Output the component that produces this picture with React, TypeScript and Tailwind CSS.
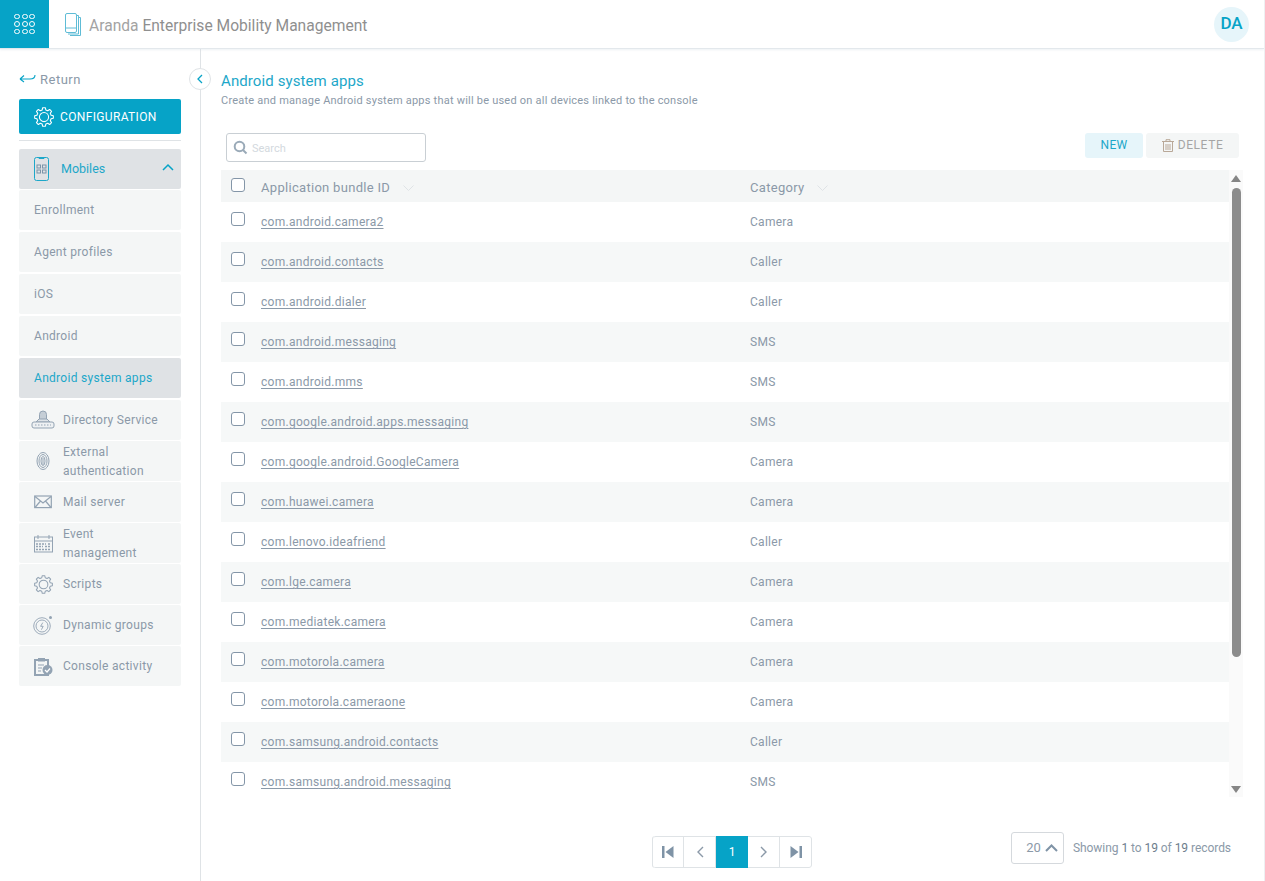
import React from "react";

const rows: [string, string][] = [
  ["com.android.camera2", "Camera"],
  ["com.android.contacts", "Caller"],
  ["com.android.dialer", "Caller"],
  ["com.android.messaging", "SMS"],
  ["com.android.mms", "SMS"],
  ["com.google.android.apps.messaging", "SMS"],
  ["com.google.android.GoogleCamera", "Camera"],
  ["com.huawei.camera", "Camera"],
  ["com.lenovo.ideafriend", "Caller"],
  ["com.lge.camera", "Camera"],
  ["com.mediatek.camera", "Camera"],
  ["com.motorola.camera", "Camera"],
  ["com.motorola.cameraone", "Camera"],
  ["com.samsung.android.contacts", "Caller"],
  ["com.samsung.android.messaging", "SMS"],
];

function gearPath() {
  const pts: string[] = [];
  const teeth = 8;
  for (let i = 0; i < teeth; i++) {
    const a = (i / teeth) * Math.PI * 2;
    const step = (Math.PI * 2) / teeth;
    const p = (r: number, t: number) => `${(12 + r * Math.cos(t)).toFixed(2)} ${(12 + r * Math.sin(t)).toFixed(2)}`;
    pts.push(`${i === 0 ? "M" : "L"}${p(8.8, a - step * 0.32)}`);
    pts.push(`L${p(11.3, a - step * 0.18)}`);
    pts.push(`L${p(11.3, a + step * 0.18)}`);
    pts.push(`L${p(8.8, a + step * 0.32)}`);
  }
  return pts.join(" ") + "Z";
}

const Gear = ({ size, color, sw = 1.2 }: { size: number; color: string; sw?: number }) => (
  <svg width={size} height={size} viewBox="0 0 24 24" fill="none" stroke={color} strokeWidth={sw} strokeLinejoin="round">
    <path d={gearPath()} />
    <circle cx="12" cy="12" r="5.5" />
  </svg>
);

const subItems = ["Enrollment", "Agent profiles", "iOS", "Android", "Android system apps"];

const ic = "#93a3b3";
const icons: Record<string, React.ReactNode> = {
  dir: (
    <svg width="24" height="20" viewBox="0 0 24 20" fill="none" stroke={ic} strokeWidth="1">
      <path d="M8.5 9V4.5a3.5 3.5 0 0 1 7 0V9" fill="#c5ced6" />
      <path d="M5 12l3-3h8l3 3z" fill="#dfe4e8" />
      <rect x="1" y="12" width="22" height="6" rx="2" fill="#eef1f3" />
      <path d="M4 15h16" strokeDasharray="1.5 1.5" />
    </svg>
  ),
  ext: (
    <svg width="14" height="20" viewBox="0 0 14 20" fill="none" stroke={ic} strokeWidth="1">
      <ellipse cx="7" cy="10" rx="6" ry="8.5" />
      <ellipse cx="7" cy="10" rx="4" ry="6.5" />
      <ellipse cx="7" cy="10" rx="2" ry="4.5" />
      <path d="M7 7v7" />
    </svg>
  ),
  mail: (
    <svg width="18" height="14" viewBox="0 0 18 14" fill="none" stroke={ic} strokeWidth="1.2">
      <rect x=".7" y="1" width="16.6" height="11.6" />
      <path d="M1 1.5l8 6.5 8-6.5M1 12.5l5.5-6.5M17 12.5L11.5 6" />
    </svg>
  ),
  event: (
    <svg width="19" height="19" viewBox="0 0 19 19" fill="none" stroke={ic} strokeWidth="1">
      <rect x=".5" y="3" width="18" height="15" />
      <path d="M4 1v4M15 1v4M.5 7h18" />
      <path d="M2 10h10M14 10h3M2 12.5h7M11 12.5h6M2 15.5h15" strokeWidth="1.4" strokeDasharray="2 1" />
    </svg>
  ),
  scripts: <Gear size={19} color={ic} sw={1.3} />,
  dyn: (
    <svg width="20" height="20" viewBox="0 0 20 20" fill="none" stroke={ic} strokeWidth=".9">
      <circle cx="9" cy="11" r="8.3" />
      <circle cx="9" cy="11" r="6" />
      <path d="M9.8 7.6L7.6 11.3h2.6l-1.8 3.4" />
      <circle cx="17.5" cy="2.5" r="1.5" fill={ic} stroke="none" />
    </svg>
  ),
  con: (
    <svg width="19" height="19" viewBox="0 0 19 19" fill="none">
      <path d="M1 3h13v15H1z" fill="none" stroke={ic} strokeWidth="2" />
      <rect x="4" y="1" width="7" height="3.5" fill={ic} />
      <path d="M4 8h6M4 11h4M4 14h3" stroke={ic} />
      <circle cx="13.5" cy="13" r="5" fill={ic} />
      <path d="M11 13l2 2 3-3.5" stroke="#fff" strokeWidth="1.2" />
    </svg>
  ),
};

const mainItems: { k: string; label: React.ReactNode; h?: boolean }[] = [
  { k: "dir", label: "Directory Service" },
  { k: "ext", label: <>External<br />authentication</>, h: true },
  { k: "mail", label: "Mail server" },
  { k: "event", label: <>Event<br />management</>, h: true },
  { k: "scripts", label: "Scripts" },
  { k: "dyn", label: "Dynamic groups" },
  { k: "con", label: "Console activity" },
];

const Check = () => <span className="block w-[14px] h-[14px] rounded-[3px] border border-[#8496a8] bg-white shrink-0" />;

const PageBtn = ({ children, cls = "w-[32px]" }: { children: React.ReactNode; cls?: string }) => (
  <div className={`h-[32px] flex items-center justify-center border-y border-r border-[#dfe3e6] ${cls}`}>{children}</div>
);

export default function App() {
  return (
    <div className="w-[1265px] h-[881px] overflow-hidden bg-white flex flex-col text-[#8b99a8] border-r border-[#eef0f2]" style={{ fontFamily: '"Roboto","Liberation Sans",sans-serif' }}>
      <header className="h-[49px] shrink-0 flex items-center border-b border-[#e3e8ec] shadow-[0_1px_2px_rgba(210,220,230,0.4)] relative z-10 bg-white">
        <div className="w-[49px] h-[48px] bg-[#06a3c7] grid grid-cols-3 gap-x-[1.5px] gap-y-[2px] content-center justify-center px-[14px]">
          {Array.from({ length: 9 }).map((_, i) => (
            <span key={i} className="w-[6px] h-[5.5px] rounded-full border-[1.5px] border-white" />
          ))}
        </div>
        <svg className="ml-[16px]" width="16" height="23" viewBox="0 0 16 23" fill="none" stroke="#5fbcd6" strokeWidth="1">
          <rect x=".5" y=".5" width="11" height="19" rx="1.5" />
          <path d="M12 2.5h1.5v18.5H3M14 4.5h1.5v18H5" />
          <path d="M.5 15h11" />
        </svg>
        <div className="ml-[8px] mt-[5px] text-[15.6px] text-[#a3a3a3]">
          Aranda <span className="text-[#8f8f8f]">Enterprise Mobility Management</span>
        </div>
        <div className="ml-auto mr-[15px] w-[35px] h-[35px] rounded-full bg-[#e6f5fa] flex items-center justify-center text-[#06a3c7] text-[17px] font-medium">DA</div>
      </header>

      <div className="flex flex-1 min-h-0">
        <aside className="w-[201px] shrink-0 border-r border-[#dfe3e6] relative pl-[19px] pr-[19px] pt-[21px]">
          <button className="absolute -right-[11px] top-[19px] w-[22px] h-[22px] rounded-full bg-white border border-[#dfe3e6] flex items-center justify-center">
            <svg width="8" height="10" viewBox="0 0 8 10" fill="none" stroke="#06a3c7" strokeWidth="1.3"><path d="M6 1L2 5l4 4" /></svg>
          </button>
          <div className="flex items-center h-[20px] text-[13px] text-[#8b99a8] tracking-[0.5px]">
            <svg width="17" height="10" viewBox="0 0 17 10" fill="none" stroke="#06a3c7" strokeWidth="1.1" className="mr-[4px] -mt-[3px]">
              <path d="M16 1c0 3-2 4-5 4H1M1 5l4-3.5M1 5l4 3" />
            </svg>
            Return
          </div>
          <div className="mt-[9px] h-[35px] rounded-[2px] bg-[#06a3c7] flex items-center pl-[15px] text-white text-[12px] tracking-[0.35px]">
            <span className="mr-[6px] flex"><Gear size={20} color="#fff" sw={1.3} /></span>
            CONFIGURATION
          </div>
          <div className="mt-[6px] border-t border-[#dfe3e6]" />
          <div className="mt-[8px] h-[40px] mb-px rounded-[2px] bg-[#dfe2e5] flex items-center pl-[15px] pr-[7px] text-[#1da7c9] text-[12.5px]">
            <svg width="15" height="24" viewBox="0 0 15 24" fill="none" stroke="#1da7c9" strokeWidth="1" className="mr-[12px]">
              <rect x=".5" y=".5" width="14" height="23" rx="2" />
              <path d="M5 .5v1h5v-1" />
              <rect x="3" y="8" width="3.5" height="3" stroke="#7a93a8" />
              <rect x="8.5" y="8" width="3.5" height="3" stroke="#7a93a8" />
              <rect x="3" y="13" width="3.5" height="3" stroke="#7a93a8" />
              <rect x="8.5" y="13" width="3.5" height="3" stroke="#7a93a8" />
            </svg>
            Mobiles
            <svg className="ml-auto -mt-[4px]" width="12" height="8" viewBox="0 0 12 8" fill="none" stroke="#06a3c7" strokeWidth="1.5"><path d="M1 7l5-5 5 5" /></svg>
          </div>
          {subItems.map((s) => {
            const active = s === "Android system apps";
            return (
              <div key={s} className={`h-[40px] mb-[2px] rounded-[2px] flex items-center pl-[15px] text-[12px] tracking-[0.3px] ${active ? "bg-[#dfe2e5] text-[#1da7c9]" : "bg-[#f4f6f6]"}`}>{s}</div>
            );
          })}
          {mainItems.map((m) => (
            <div key={m.k} className="h-[40px] mb-px rounded-[2px] bg-[#f4f6f6] flex items-center text-[12px] tracking-[0.3px]">
              <div className="w-[44px] flex justify-center pl-[4px] shrink-0">{icons[m.k]}</div>
              <div className={m.h ? "leading-[19px] pt-[2px]" : ""}>{m.label}</div>
            </div>
          ))}
        </aside>

        <main className="flex-1 min-w-0 pl-[20px] pr-[21px] flex flex-col">
          <h1 className="mt-[22px] text-[15px] leading-[20px] text-[#1da7c9] tracking-[0.1px]">Android system apps</h1>
          <p className="mt-[3px] text-[11px] leading-[14px] text-[#8b99a8] tracking-[0.22px]">Create and manage Android system apps that will be used on all devices linked to the console</p>

          <div className="mt-[25px] flex items-start h-[29px] pl-[5px] pr-[5px] w-[1023px] justify-between">
            <div className="w-[200px] h-[29px] rounded-[3px] border border-[#c9cfd4] flex items-center pl-[6px] text-[11px] text-[#d3d9de]">
              <svg width="15" height="15" viewBox="0 0 15 15" fill="none" stroke="#9aaab8" strokeWidth="2" className="mr-[4px]"><circle cx="6.5" cy="6.5" r="4.8" /><path d="M10 10l3.5 3.5" /></svg>
              <span className="pt-[3px]">Search</span>
            </div>
            <div className="flex gap-[3px]">
              <div className="w-[58px] h-[25px] pb-[2px] rounded-[3px] bg-[#e6f5fa] flex items-center justify-center text-[12px] text-[#1da7c9] tracking-[0.3px]">NEW</div>
              <div className="w-[93px] h-[25px] rounded-[3px] bg-[#f4f6f6] flex items-center justify-center text-[12px] text-[#a5a5a5] tracking-[0.6px]">
                <svg width="12" height="13" viewBox="0 0 12 13" fill="none" stroke="#b9a898" strokeWidth="1" className="mr-[4px]"><path d="M0 2.5h12M4 2V.7h4V2M1.5 3v9.5h9V3M4 5v6M6 5v6M8 5v6" /></svg>
                <span className="-mt-[2px]">DELETE</span>
              </div>
            </div>
          </div>

          <div className="mt-[8px] flex h-[627px]">
            <div className="w-[1008px] overflow-hidden">
              <div className="h-[32px] bg-[#f4f6f6] flex items-center pl-[10px] text-[13px] tracking-[0.3px]">
                <span className="-mt-[3px]"><Check /></span>
                <span className="ml-[16px] w-[489px] flex items-center pt-[4px]">
                  Application bundle ID
                  <svg className="ml-[13px]" width="11" height="6" viewBox="0 0 11 6" fill="none" stroke="#dfe3e6" strokeWidth="1"><path d="M.5.5l5 5 5-5" /></svg>
                </span>
                <span className="flex items-center pt-[4px]">
                  Category
                  <svg className="ml-[13px]" width="11" height="6" viewBox="0 0 11 6" fill="none" stroke="#dfe3e6" strokeWidth="1"><path d="M.5.5l5 5 5-5" /></svg>
                </span>
              </div>
              {rows.map(([id, cat], i) => (
                <div key={id} className={`h-[40px] shrink-0 flex items-center pl-[10px] text-[12px] tracking-[0.28px] ${i % 2 ? "bg-[#f6f8f8]" : "bg-white"}`}>
                  <span className="-mt-[6px]"><Check /></span>
                  <span className="ml-[16px] w-[489px] underline underline-offset-2">{id}</span>
                  <span>{cat}</span>
                </div>
              ))}
            </div>
            <div className="w-[14px] bg-[#fafafa] flex flex-col items-center">
              <svg className="mt-[5px]" width="10" height="7" viewBox="0 0 10 7" fill="#858585"><path d="M5 0l5 7H0z" /></svg>
              <div className="mt-[6px] w-[9px] h-[469px] rounded-full bg-[#8c8c8c]" />
              <svg className="mt-auto mb-[4px]" width="10" height="7" viewBox="0 0 10 7" fill="#858585"><path d="M5 7L0 0h10z" /></svg>
            </div>
          </div>

          <div className="mt-[39px] flex items-center h-[32px] w-[1010px]">
            <div className="ml-[431px] flex rounded-[3px] border-l border-[#dfe3e6] overflow-hidden">
              <PageBtn cls="w-[31px] rounded-l-[3px]">
                <svg width="12" height="12" viewBox="0 0 12 12" fill="#7f93a6"><rect x="0" y="0" width="2.5" height="12" /><path d="M11.5 0v12L3.5 6z" /></svg>
              </PageBtn>
              <PageBtn>
                <svg width="8" height="12" viewBox="0 0 8 12" fill="none" stroke="#8b99a8" strokeWidth="1.4"><path d="M7 1L2 6l5 5" /></svg>
              </PageBtn>
              <div className="w-[32px] h-[32px] bg-[#06a3c7] flex items-center justify-center text-white text-[12px]">1</div>
              <PageBtn>
                <svg width="8" height="12" viewBox="0 0 8 12" fill="none" stroke="#8b99a8" strokeWidth="1.4"><path d="M1 1l5 5-5 5" /></svg>
              </PageBtn>
              <PageBtn cls="w-[32px] rounded-r-[3px]">
                <svg width="12" height="12" viewBox="0 0 12 12" fill="#7f93a6"><path d="M.5 0v12l8-6z" /><rect x="9.5" y="0" width="2.5" height="12" /></svg>
              </PageBtn>
            </div>
            <div className="ml-auto flex items-center -mt-[8px]">
              <div className="w-[53px] h-[32px] rounded-[3px] border border-[#d5d9dd] flex items-center justify-end pr-[5px] text-[13px] text-[#8b99a8]">
                20
                <svg className="ml-[4px]" width="13" height="8" viewBox="0 0 13 8" fill="none" stroke="#7f93a6" strokeWidth="2"><path d="M1 7l5.5-5.5L12 7" /></svg>
              </div>
              <span className="ml-[9px] text-[12px] tracking-[-0.05px] text-[#8b99a8]">Showing <span className="text-[#6d7d8c]">1</span> to <span className="text-[#6d7d8c]">19</span> of <span className="text-[#6d7d8c]">19</span> records</span>
            </div>
          </div>
        </main>
      </div>
    </div>
  );
}
